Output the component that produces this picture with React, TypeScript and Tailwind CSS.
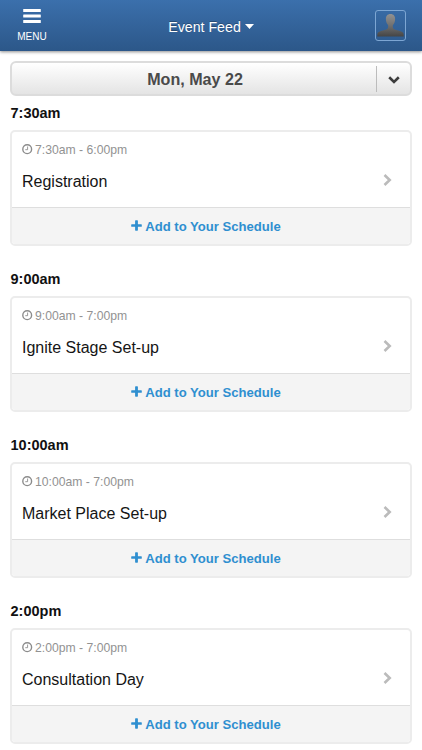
const events = [
  { start: "7:30am", range: "7:30am - 6:00pm", title: "Registration" },
  { start: "9:00am", range: "9:00am - 7:00pm", title: "Ignite Stage Set-up" },
  { start: "10:00am", range: "10:00am - 7:00pm", title: "Market Place Set-up" },
  { start: "2:00pm", range: "2:00pm - 7:00pm", title: "Consultation Day" },
];

type EventItem = (typeof events)[number];

function MenuIcon() {
  return (
    <svg width="18" height="16" viewBox="0 0 18 16" fill="white">
      <rect x="0.2" y="1" width="17.6" height="3" rx="0.5" />
      <rect x="0.2" y="6.500" width="17.6" height="3" rx="0.5" />
      <rect x="0.2" y="12" width="17.6" height="3" rx="0.5" />
    </svg>
  );
}

function Avatar() {
  return (
    <svg width="27" height="27" viewBox="0 0 27 27" className="block">
      <defs>
        <linearGradient id="person" x1="0" y1="0" x2="0" y2="1">
          <stop offset="0" stopColor="#929292" />
          <stop offset="0.5" stopColor="#717171" />
          <stop offset="1" stopColor="#454545" />
        </linearGradient>
      </defs>
      <path
        fill="url(#person)"
        d="M13.500 2c-3.200 0-4.700 2.200-4.600 5.200.1 2.500.9 4.600 2.200 5.900.3 1.900.1 3.300-1.300 4.100C6.500 18.800 1.300 18.600.4 21.800L.2 24.500h26.600l-.2-2.700c-.9-3.200-6.100-3-9.400-4.600-1.400-.8-1.600-2.200-1.300-4.100 1.300-1.300 2.100-3.400 2.200-5.900.1-3-1.400-5.200-4.600-5.200z"
      />
    </svg>
  );
}

function ClockIcon() {
  return (
    <svg width="11" height="11" viewBox="0 0 11 11" fill="none" stroke="#8c8c8c">
      <circle cx="5.200" cy="5.200" r="4.400" strokeWidth="1.400" />
      <path d="M5.600 2.500v3.200H3.300" strokeWidth="0.9" />
    </svg>
  );
}

function PlusIcon() {
  return (
    <svg width="11" height="11" viewBox="0 0 11 11" fill="#2f8fd0" className="-mt-px">
      <path d="M4.700 0.300h1.600q.6 0 .6.600v3.300h3.300q.6 0 .6.600v1.400q0 .6-.6.600H6.900v3.300q0 .6-.6.600H4.700q-.6 0-.6-.6V6.800H.8q-.6 0-.6-.6V4.800q0-.6.600-.6h3.300V.9q0-.6.600-.6z" />
    </svg>
  );
}

function EventCard({ event }: { event: EventItem }) {
  return (
    <section className="h-[166px]">
      <h2 className="h-[26px] pl-[0.5px] text-[14.500px] leading-[18px] font-bold text-[#111]">{event.start}</h2>
      <div className="flex h-[116px] flex-col overflow-hidden rounded-[5px] border-2 border-[#ececec] bg-white">
        <div className="flex h-[75px] items-center justify-between pr-[18px] pl-[10px]">
          <div className="h-full">
            <div className="flex h-[35px] items-center gap-[2px] text-[12.200px] text-[#929292]">
              <ClockIcon />
              <span className="pt-[2px]">{event.range}</span>
            </div>
            <div className="pt-[4px] text-[16px] leading-[22px] text-[#151515]">{event.title}</div>
          </div>
          <svg width="9" height="14" viewBox="0 0 9 14" fill="none" stroke="#bbb" strokeWidth="2.600" className="mt-[20px]">
            <path d="M1.500 2 6.700 7l-5.200 5" />
          </svg>
        </div>
        <button className="flex flex-1 items-center justify-center gap-[3px] border-t border-[#dedede] bg-[#f4f4f4] pr-[10px] text-[13.100px] font-bold text-[#2f8fd0]">
          <PlusIcon />
          <span className="pt-[2px]">Add to Your Schedule</span>
        </button>
      </div>
    </section>
  );
}

export default function App() {
  return (
    <div className="h-[750px] w-[422px] overflow-hidden bg-white font-['Liberation_Sans',Arial,sans-serif]">
      <header className="grid h-[51px] grid-cols-[64px_1fr_64px] bg-linear-to-b from-[#3b70ac] to-[#2c5789] text-white shadow-[0_1px_3px_rgba(0,0,0,0.45)]">
        <button className="flex flex-col items-center pt-[8px]">
          <MenuIcon />
          <span className="mt-[6px] text-[10px] leading-[14px]">MENU</span>
        </button>
        <button className="flex items-center justify-center gap-[4px] pt-[4px] text-[14.200px] [text-shadow:0_-1px_0_rgba(0,0,0,0.25)]">
          Event Feed
          <svg width="9" height="5" viewBox="0 0 9 5" fill="white" className="-mt-[3px]">
            <path d="M0 0h9L4.500 5z" />
          </svg>
        </button>
        <div className="flex justify-end pt-[10px] pr-[16px]">
          <div className="flex h-[31px] w-[31px] items-center justify-center rounded-[3px] border border-[#7da6d3]">
            <Avatar />
          </div>
        </div>
      </header>
      <main className="px-[10px] pt-[10px]">
        <button className="flex h-[35px] w-full items-center rounded-[6px] border-2 border-[#dcdcdc] bg-linear-to-b from-white to-[#e4e4e4]">
          <span className="flex-1 pt-px pl-[2px] text-center text-[16.100px] leading-5 font-bold text-[#4a4a4a]">Mon, May 22</span>
          <span className="flex h-[26px] w-[34px] items-center justify-center border-l border-[#bcbcbc] pt-[2px]">
            <svg width="12" height="8" viewBox="0 0 12 8" fill="none" stroke="#3d3d3d" strokeWidth="2.600">
              <path d="m1.200 1.300 4.800 4.700 4.800-4.700" />
            </svg>
          </span>
        </button>
        <div className="pt-[8px]">
          {events.map((event) => (
            <EventCard key={event.start} event={event} />
          ))}
        </div>
      </main>
    </div>
  );
}
